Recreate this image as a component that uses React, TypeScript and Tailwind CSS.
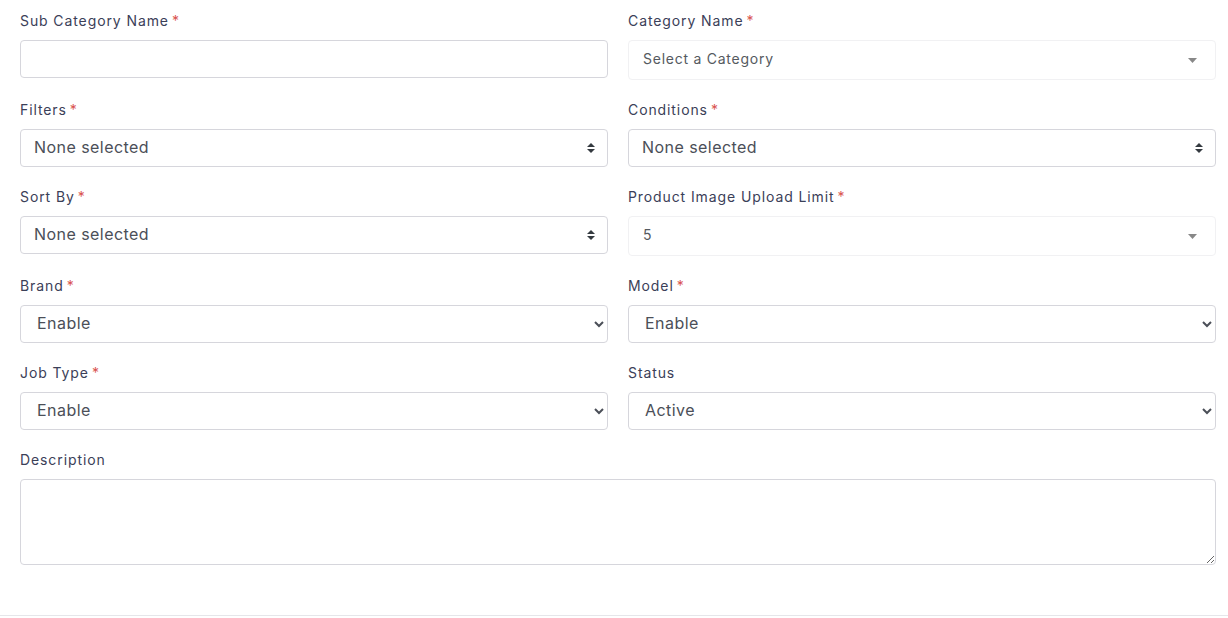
import React from 'react';

const font = { fontFamily: 'Inter, "Noto Sans", sans-serif' };

function Label({ text, required = true }: { text: string; required?: boolean }) {
  return (
    <label className="mb-[9px] block h-[21px] text-[14px] leading-[21px] tracking-[0.9px] text-[#3b4058]">
      {text}
      {required && <span className="ml-[3px] text-[#d9534f]">*</span>}
    </label>
  );
}

function MultiSelect() {
  return (
    <button
      type="button"
      className="flex h-[38px] w-full items-center justify-between rounded-[4px] border border-[#d6d6dc] bg-white pl-[13px] pr-[12px] text-left text-[16px] tracking-[0.45px] text-[#4b4f58]"
    >
      <span className="-mt-[2px]">None selected</span>
      <svg width="8" height="12" viewBox="0 0 8 12" className="fill-[#343a40]">
        <path d="M0 5 L4 1 L8 5 Z" />
        <path d="M0 7 L4 11 L8 7 Z" />
      </svg>
    </button>
  );
}

function Select2({ value }: { value: string }) {
  return (
    <div className="flex h-[40px] w-full items-center justify-between rounded-[4px] border border-[#f1f1f3] bg-white pl-[14px] pr-[18px] text-[14px] tracking-[0.75px] text-[#555a60]">
      <span className="-mt-[3px]">{value}</span>
      <svg width="9" height="5" viewBox="0 0 9 5" className="fill-[#888]">
        <path d="M0 0 H9 L4.5 5 Z" />
      </svg>
    </div>
  );
}

function NativeSelect({ value, options }: { value: string; options: string[] }) {
  return (
    <select
      defaultValue={value}
      className="h-[38px] w-full rounded-[4px] border border-[#d6d6dc] bg-white pb-[2px] pl-[12px] pr-[6px] text-[16px] tracking-[0.45px] text-[#4b4f58] outline-none"
      style={font}
    >
      {options.map((o) => (
        <option key={o}>{o}</option>
      ))}
    </select>
  );
}

export default function App() {
  return (
    <div className="min-h-[618px] bg-white" style={font}>
      <div className="pl-5 pr-3 pt-[10px]">
        <div className="mb-[19px] grid grid-cols-2 gap-x-5">
          <div>
            <Label text="Sub Category Name" />
            <input
              type="text"
              className="h-[38px] w-full rounded-[4px] border border-[#d6d6dc] bg-white px-3 text-[16px] outline-none"
            />
          </div>
          <div>
            <Label text="Category Name" />
            <Select2 value="Select a Category" />
          </div>
        </div>

        <div className="mb-[19px] grid grid-cols-2 gap-x-5">
          <div>
            <Label text="Filters" />
            <MultiSelect />
          </div>
          <div>
            <Label text="Conditions" />
            <MultiSelect />
          </div>
        </div>

        <div className="mb-[19px] grid grid-cols-2 gap-x-5">
          <div>
            <Label text="Sort By" />
            <MultiSelect />
          </div>
          <div>
            <Label text="Product Image Upload Limit" />
            <Select2 value="5" />
          </div>
        </div>

        <div className="mb-[19px] grid grid-cols-2 gap-x-5">
          <div>
            <Label text="Brand" />
            <NativeSelect value="Enable" options={['Enable', 'Disable']} />
          </div>
          <div>
            <Label text="Model" />
            <NativeSelect value="Enable" options={['Enable', 'Disable']} />
          </div>
        </div>

        <div className="mb-[19px] grid grid-cols-2 gap-x-5">
          <div>
            <Label text="Job Type" />
            <NativeSelect value="Enable" options={['Enable', 'Disable']} />
          </div>
          <div>
            <Label text="Status" required={false} />
            <NativeSelect value="Active" options={['Active', 'Inactive']} />
          </div>
        </div>

        <div>
          <Label text="Description" required={false} />
          <textarea className="block h-[86px] w-full rounded-[4px] border border-[#d6d6dc] bg-white px-3 py-2 text-[16px] outline-none" />
        </div>
      </div>
      <div className="mt-[50px] border-t border-[#e6e6ea]" />
    </div>
  );
}
